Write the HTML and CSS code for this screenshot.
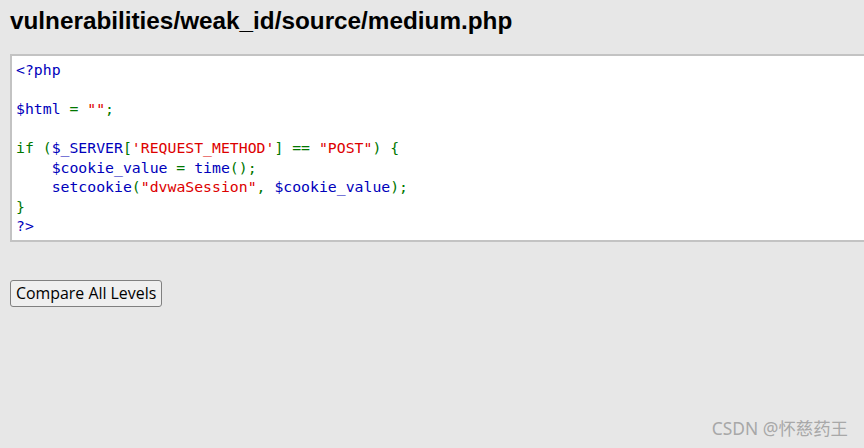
FILE: index.html
```html
<!DOCTYPE html>
<html>
<head>
<meta charset="utf-8">
<link rel="stylesheet" href="styles.css">
</head>
<body>
<div class="page">
  <h1 class="title">vulnerabilities/weak_id/source/medium.php</h1>
  <div class="code"><code><span class="d">&lt;?php<br><br>$html&nbsp;</span><span class="k">=&nbsp;</span><span class="s">""</span><span class="k">;<br><br>if&nbsp;(</span><span class="d">$_SERVER</span><span class="k">[</span><span class="s">'REQUEST_METHOD'</span><span class="k">]&nbsp;==&nbsp;</span><span class="s">"POST"</span><span class="k">)&nbsp;{<br>&nbsp;&nbsp;&nbsp;&nbsp;</span><span class="d">$cookie_value&nbsp;</span><span class="k">=&nbsp;</span><span class="d">time</span><span class="k">();<br>&nbsp;&nbsp;&nbsp;&nbsp;</span><span class="d">setcookie</span><span class="k">(</span><span class="s">"dvwaSession"</span><span class="k">,&nbsp;</span><span class="d">$cookie_value</span><span class="k">);<br>}<br></span><span class="d">?&gt;</span></code></div>
  <div class="actions">
    <button class="btn" type="button">Compare All Levels</button>
  </div>
</div>
<div class="watermark">CSDN @怀慈药王</div>
</body>
</html>
```

FILE: styles.css
```css
html, body {
  margin: 0;
  padding: 0;
  background: #e7e7e7;
  overflow: hidden;
  height: 448px;
}
.page {
  padding: 0 0 0 10px;
}
.title {
  margin: 0;
  padding-top: 6px;
  font-family: "Liberation Sans", Arial, sans-serif;
  font-weight: bold;
  font-size: 24.3px;
  line-height: 30px;
  color: #000;
}
.code {
  margin-top: 18px;
  background: #fff;
  border: 2px solid #c3c3c3;
  border-right: none;
  padding: 4px 4px 4px 4px;
  font-family: "DejaVu Sans Mono", "Liberation Mono", monospace;
  font-size: 14.8px;
  line-height: 19.5px;
}
.code code {
  font-family: inherit;
}
.d { color: #0000bb; }
.k { color: #007700; }
.s { color: #dd0000; }
.actions {
  margin-top: 38px;
}
.btn {
  font-family: "Open Sans", "Noto Sans", sans-serif;
  font-size: 15.9px;
  height: 27px;
  padding: 0 5px;
  background: #efefef;
  border: 1px solid #808080;
  border-radius: 3px;
  color: #000;
}
.watermark {
  position: absolute;
  right: 16px;
  bottom: 8px;
  font-family: "Noto Sans", "Noto Sans CJK SC", sans-serif;
  font-size: 17.4px;
  color: #a8a8a8;
}
```
